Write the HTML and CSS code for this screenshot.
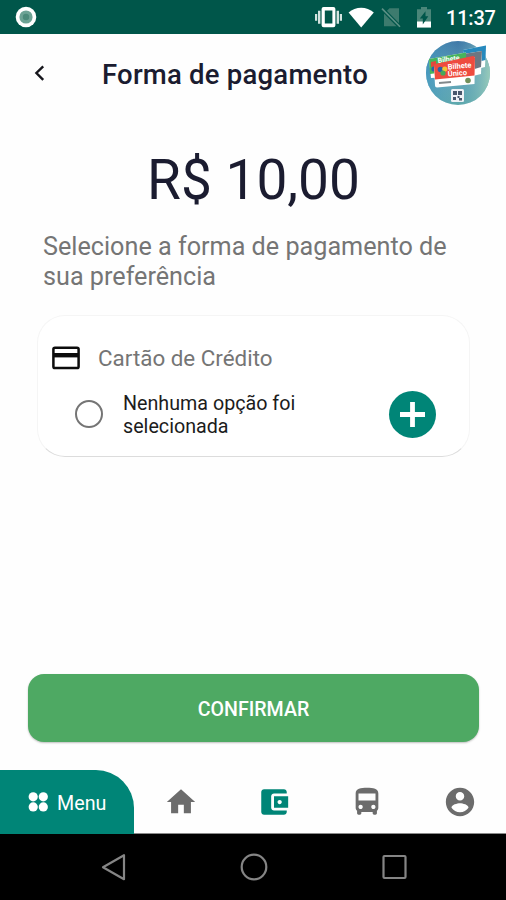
FILE: index.html
```html
<!DOCTYPE html>
<html lang="pt-BR">
<head>
    <meta charset="UTF-8">
    <meta name="viewport" content="width=device-width, initial-scale=1.0">
    <title>Forma de pagamento</title>
    <link rel="stylesheet" href="styles.css">
</head>
<body>
    <div class="screen">
        <!-- Android status bar -->
        <div class="status-bar">
            <svg class="status-dot" width="22" height="22" viewBox="0 0 22 22">
                <circle cx="11" cy="11" r="10.3" fill="#fff"/>
                <circle cx="11" cy="11" r="6.6" fill="#6da395"/>
                <circle cx="11" cy="11" r="3.2" fill="#4c8a7a"/>
            </svg>
            <svg class="status-icons" width="122" height="24" viewBox="0 0 122 24">
                <!-- vibrate -->
                <g fill="#fff">
                    <path fill-rule="evenodd" d="M8.6 2h9.8a2 2 0 0 1 2 2v16.2a2 2 0 0 1-2 2H8.6a2 2 0 0 1-2-2V4a2 2 0 0 1 2-2zm1.2 3.6v13h7.6v-13z"/>
                    <path d="M3 5.8h2.4v13H3zM0 9h2.2v6.8H0zM21.6 5.8H24v13h-2.4zM24.800 9H27v6.8h-2.2z" fill="#d3e3df"/>
                </g>
                <!-- wifi -->
                <path d="M33.6 7.6C40.5 1.1 51.8 1.1 58.8 7.6L46.2 22.4z" fill="#fff"/>
                <!-- no sim -->
                <path d="M74.5 3.2H84v18H69V8.7z" fill="#3d7b6e"/>
                <path d="M67 3.6l18.4 18.7" stroke="#00564a" stroke-width="4"/>
                <path d="M67 3.6l18 18.2" stroke="#5c9186" stroke-width="1.6"/>
                <!-- battery -->
                <path d="M106 2h6v2.200h4V22.500h-14V4.200h4z" fill="#4a8679"/>
                <path d="M102 16.500h14v6h-14z" fill="#fff"/>
                <path d="M110.500 6.300v5h2.800l-5.500 8.200v-6h-3z" fill="#00564a"/>
            </svg>
            <span class="clock">11:37</span>
        </div>

        <!-- Header -->
        <header class="header">
            <svg class="back" width="12" height="18" viewBox="0 0 12 18">
                <path d="M10.200 2.300L3.400 9l6.800 6.800" fill="none" stroke="#16161c" stroke-width="2.400"/>
            </svg>
            <h1 class="title">Forma de pagamento</h1>
            <svg class="avatar" width="66" height="66" viewBox="0 0 66 66">
                <defs>
                    <linearGradient id="sky" x1="0.600" y1="0" x2="0.700" y2="1">
                        <stop offset="0" stop-color="#3f79a8"/>
                        <stop offset="0.550" stop-color="#63a5bd"/>
                        <stop offset="1" stop-color="#5da8aa"/>
                    </linearGradient>
                    <linearGradient id="side" x1="0" x2="1">
                        <stop offset="0" stop-color="#3d97bf" stop-opacity="0.700"/>
                        <stop offset="0.500" stop-color="#5fa5bd" stop-opacity="0"/>
                        <stop offset="1" stop-color="#9ecfb9" stop-opacity="0.900"/>
                    </linearGradient>
                </defs>
                <circle cx="33" cy="33" r="32" fill="url(#sky)"/>
                <circle cx="33" cy="33" r="32" fill="url(#side)"/>
                <!-- cards, back to front -->
                <path d="M38 10L61 5.500 60 27 40 32z" fill="#fff"/>
                <path d="M38 10L61 5.500 60.500 20 40 25z" fill="#2689bd"/>
                <path d="M32 15L57 11 56 34 40 38z" fill="#fff"/>
                <path d="M32 15L57 11 56 27 40 32z" fill="#6d7681"/>
                <path d="M4 19L41 12.500V36L6 38z" fill="#fff"/>
                <path d="M4 19L41 12.500V29L5 34z" fill="#46b45c"/>
                <path d="M6 22l5-1v5l-5 1z" fill="#e0493c"/>
                <circle cx="9" cy="29" r="2.600" fill="#2860a8"/>
                <text class="card-name" x="13" y="23" transform="rotate(-8 13 23)">Bilhete</text>
                <path d="M9 26L50 17 49.500 44 12 47.500q-2 0-2-2z" fill="#fff"/>
                <path d="M9 26q0-2 2-2.300L48 16q2 0 2 2L49.500 35.500 10 39.500z" fill="#ee4b3f"/>
                <circle cx="15.500" cy="29.500" r="2.800" fill="#2860a8"/>
                <circle cx="19.800" cy="29" r="2.600" fill="#f2c534"/>
                <circle cx="18" cy="33" r="2.600" fill="#45a85a"/>
                <text class="card-name front" x="23" y="29.500" transform="rotate(-5 23 29.500)">Bilhete</text>
                <text class="card-name front" x="23" y="36.500" transform="rotate(-5 23 36.500)">Único</text>
                <path d="M14 43l12-1" stroke="#82898c" stroke-width="2"/>
                <circle cx="43" cy="40.500" r="2.800" fill="#718f59"/>
                <rect x="26" y="49" width="13" height="13" rx="1.500" fill="#eef1f5"/>
                <path d="M28 51h4v4h-4zM33 51h4v4h-4zM28 57h3v3h-3zM32.500 56h2v2h-2zM34 58h3v2.500h-3z" fill="#48566b"/>
            </svg>
        </header>

        <main class="content">
            <div class="amount">R$ 10,00</div>
            <p class="hint">Selecione a forma de pagamento de sua preferência</p>

            <!-- Credit card option -->
            <section class="card">
                <div class="card-head">
                    <svg class="card-icon" width="28" height="24" viewBox="0 0 28 24">
                        <rect x="1.400" y="1.700" width="25.200" height="20.400" rx="1.600" fill="none" stroke="#0c0c0c" stroke-width="2.500"/>
                        <path d="M1.500 7h25v4.400h-25z" fill="#0c0c0c"/>
                    </svg>
                    <h2 class="card-title">Cartão de Crédito</h2>
                </div>
                <div class="card-option">
                    <span class="radio"></span>
                    <p class="option-text">Nenhuma opção foi selecionada</p>
                    <button class="add-btn" aria-label="Adicionar">
                        <svg width="25" height="25" viewBox="0 0 25 25">
                            <path d="M12.500 0v25M0 12.500h25" stroke="#fff" stroke-width="4.800"/>
                        </svg>
                    </button>
                </div>
            </section>

            <button class="confirm-btn">CONFIRMAR</button>
        </main>

        <!-- Tab bar -->
        <nav class="tabs">
            <a class="menu">
                <svg width="20" height="20" viewBox="0 0 20 20" fill="#fff">
                    <circle cx="5.200" cy="4.800" r="4.600"/>
                    <circle cx="15.300" cy="4.800" r="4.600"/>
                    <circle cx="5.200" cy="14.900" r="4.600"/>
                    <circle cx="15.300" cy="14.900" r="4.600"/>
                </svg>
                <span>Menu</span>
            </a>
            <div class="tab-icons">
                <a class="tab"><svg viewBox="0 0 24 24"><path d="M10 20v-6h4v6h5v-8h3L12 3 2 12h3v8z"/></svg></a>
                <a class="tab active"><svg viewBox="0 0 24 24"><path d="M21 18v1c0 1.100-.9 2-2 2H5c-1.110 0-2-.9-2-2V5c0-1.100.89-2 2-2h14c1.100 0 2 .9 2 2v1h-9c-1.110 0-2 .9-2 2v8c0 1.100.89 2 2 2h9zm-9-2h10V8H12v8zm4-2.500c-.83 0-1.500-.67-1.500-1.500s.67-1.500 1.500-1.500 1.500.67 1.500 1.500-.67 1.500-1.500 1.500z"/></svg></a>
                <a class="tab"><svg viewBox="0 0 24 24"><path d="M4 16c0 .88.39 1.670 1 2.220V20c0 .55.45 1 1 1h1c.55 0 1-.45 1-1v-1h8v1c0 .55.45 1 1 1h1c.55 0 1-.45 1-1v-1.780c.61-.55 1-1.340 1-2.220V6c0-3.500-3.580-4-8-4s-8 .5-8 4v10zm3.500 1c-.83 0-1.500-.67-1.500-1.500S6.670 14 7.500 14s1.500.67 1.500 1.500S8.330 17 7.500 17zm9 0c-.83 0-1.500-.67-1.500-1.500s.67-1.500 1.500-1.500 1.500.67 1.500 1.500-.67 1.500-1.500 1.500zm1.500-6H6V6h12v5z"/></svg></a>
                <a class="tab"><svg viewBox="0 0 24 24"><path d="M12 2C6.480 2 2 6.480 2 12s4.480 10 10 10 10-4.480 10-10S17.520 2 12 2zm0 3c1.660 0 3 1.340 3 3s-1.340 3-3 3-3-1.340-3-3 1.340-3 3-3zm0 14.200c-2.500 0-4.710-1.280-6-3.220.03-1.990 4-3.080 6-3.080 1.990 0 5.970 1.090 6 3.080-1.290 1.940-3.500 3.220-6 3.220z"/></svg></a>
            </div>
        </nav>

        <!-- Android navigation bar -->
        <div class="system-nav">
            <svg width="28" height="28" viewBox="0 0 28 28"><path d="M24 2.200v24L3 14.200z"/></svg>
            <svg width="28" height="28" viewBox="0 0 28 28"><circle cx="14" cy="14" r="12.300"/></svg>
            <svg width="28" height="28" viewBox="0 0 28 28"><rect x="3.500" y="3" width="22" height="22" rx="1"/></svg>
        </div>
    </div>
</body>
</html>
```
FILE: styles.css
```css
* {
    box-sizing: border-box;
}

body {
    margin: 0;
    font-family: Roboto, "Liberation Sans", sans-serif;
    background-color: #fefefe;
}

h1, h2, p {
    margin: 0;
}

button {
    border: none;
    padding: 0;
    font-family: inherit;
}

svg {
    display: block;
    flex-shrink: 0;
}

.screen {
    width: 506px;
    height: 900px;
    display: flex;
    flex-direction: column;
    overflow: hidden;
}

/* Status bar */
.status-bar {
    height: 34px;
    display: flex;
    align-items: center;
    padding: 0 10px 0 15px;
    background-color: #00564a;
}

.status-icons {
    margin-left: auto;
}

.clock {
    width: 50px;
    margin-left: 9px;
    padding-top: 2px;
    font-size: 20px;
    font-weight: 500;
    line-height: 24px;
    letter-spacing: -0.2px;
    color: #fff;
    white-space: nowrap;
}

/* Header */
.header {
    height: 80px;
    display: flex;
    align-items: center;
    padding: 0 15px 2px 33px;
}

.back {
    margin-bottom: 1px;
}

.title {
    margin-left: 57px;
    padding-top: 3px;
    font-size: 27.5px;
    font-weight: 500;
    line-height: 34px;
    letter-spacing: 0.22px;
    color: #1b1c30;
    white-space: nowrap;
}

.avatar {
    margin-left: auto;
}

.card-name {
    font-size: 7px;
    font-weight: 700;
    fill: #fff;
}

.card-name.front {
    font-size: 7.5px;
}

/* Content */
.content {
    flex: 1;
    display: flex;
    flex-direction: column;
    padding: 34px 27px 28px 28px;
}

.amount {
    font-size: 55px;
    line-height: 65px;
    text-align: center;
    color: #1b1c30;
}

.hint {
    margin: 19px 0 0 15px;
    width: 420px;
    font-size: 25.2px;
    line-height: 29.5px;
    color: #757575;
}

.card {
    height: 142px;
    margin: 24px 9px 0 9px;
    padding: 28px 33px 0 14px;
    border: 1px solid #f5f5f5;
    border-bottom-color: #dcdcdc;
    border-radius: 28px;
    background-color: #fff;
}

.card-head {
    height: 28px;
    display: flex;
    align-items: center;
}

.card-title {
    margin-left: 18px;
    font-size: 22.4px;
    font-weight: 400;
    line-height: 28px;
    color: #757575;
}

.card-option {
    display: flex;
    align-items: center;
    margin-top: 18px;
    padding-left: 23px;
}

.radio {
    width: 28px;
    height: 28px;
    border: 2.5px solid #757575;
    border-radius: 50%;
}

.option-text {
    width: 200px;
    margin-left: 20px;
    padding-top: 2px;
    font-size: 19.7px;
    line-height: 23px;
    color: #1c1c1c;
}

.add-btn {
    width: 47px;
    height: 47px;
    margin-left: auto;
    display: flex;
    align-items: center;
    justify-content: center;
    border-radius: 50%;
    background-color: #008577;
}

.confirm-btn {
    height: 68px;
    margin-top: auto;
    padding-top: 2px;
    border-radius: 16px;
    background-color: #4ea963;
    box-shadow: 0 1px 2px rgba(0, 0, 0, 0.25);
    color: #fff;
    font-size: 19.6px;
    font-weight: 500;
}

/* Tab bar */
.tabs {
    height: 64px;
    display: flex;
    border-bottom: 1px solid #8a8a8a;
}

.menu {
    width: 134px;
    height: 64px;
    display: flex;
    align-items: center;
    gap: 9px;
    padding-left: 28px;
    border-top-right-radius: 38px;
    background-color: #008577;
    color: #fff;
    font-size: 19.7px;
}

.menu span {
    padding-top: 2px;
}

.tab-icons {
    flex: 1;
    display: flex;
}

.tab {
    flex: 1;
    display: flex;
    align-items: center;
    justify-content: center;
}

.tab svg {
    width: 34px;
    height: 34px;
    fill: #6c6c6c;
}

.tab.active svg {
    fill: #008577;
}

/* System navigation */
.system-nav {
    height: 66px;
    display: flex;
    align-items: center;
    justify-content: space-between;
    padding: 0 98px 0 100px;
    background-color: #000;
}

.system-nav svg {
    fill: none;
    stroke: #858585;
    stroke-width: 2.2;
    stroke-linejoin: round;
}
```
